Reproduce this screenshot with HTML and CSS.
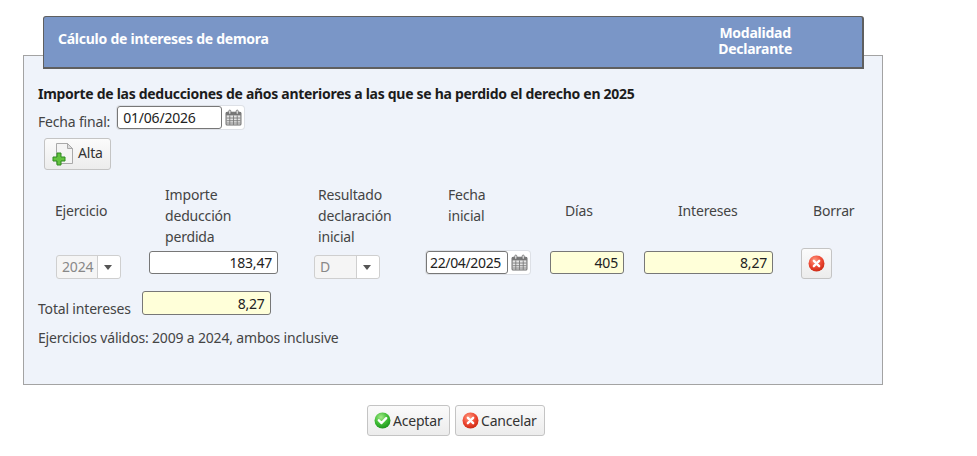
FILE: index.html
```html
<!DOCTYPE html>
<html lang="es">
<head>
    <meta charset="UTF-8">
    <title>Cálculo de intereses de demora</title>
    <link rel="stylesheet" href="styles.css">
</head>
<body>

<svg class="icon-defs" width="0" height="0">
    <defs>
        <radialGradient id="redBall" cx="40%" cy="30%" r="75%">
            <stop offset="0" stop-color="#ff9a80"/>
            <stop offset="0.55" stop-color="#ee4a35"/>
            <stop offset="1" stop-color="#c9260f"/>
        </radialGradient>
        <radialGradient id="greenBall" cx="40%" cy="30%" r="75%">
            <stop offset="0" stop-color="#a5e88a"/>
            <stop offset="0.55" stop-color="#3fbd35"/>
            <stop offset="1" stop-color="#1c8f1c"/>
        </radialGradient>
        <symbol id="calendar" viewBox="0 0 16 16">
            <rect x="1" y="3" width="14" height="12" rx="1" fill="#e4e4e4" stroke="#6d6d6d"/>
            <rect x="1" y="3" width="14" height="3" fill="#777"/>
            <path d="M1.5 8.5h13M1.5 11h13M1.5 13.2h13M4.5 6v9M8 6v9M11.5 6v9" stroke="#777" stroke-width="0.8" fill="none"/>
            <rect x="3.5" y="1" width="2" height="4" rx="1" fill="#e8e8e8" stroke="#666" stroke-width="0.7"/>
            <rect x="10.5" y="1" width="2" height="4" rx="1" fill="#e8e8e8" stroke="#666" stroke-width="0.7"/>
        </symbol>
        <symbol id="cross" viewBox="0 0 16 16">
            <circle cx="8" cy="8" r="7.5" fill="url(#redBall)"/>
            <path d="M5.5 5.5l5 5M10.5 5.500l-5 5" stroke="#fff" stroke-width="2.2" stroke-linecap="round"/>
        </symbol>
        <symbol id="check" viewBox="0 0 16 16">
            <circle cx="8" cy="8" r="7.5" fill="url(#greenBall)"/>
            <path d="M4.5 7.8l2.6 2.6 4.4-4.6" stroke="#fff" stroke-width="2.2" fill="none" stroke-linecap="round" stroke-linejoin="round"/>
        </symbol>
    </defs>
</svg>

<div class="page">
    <div class="title-bar">
        <div class="title-text">Cálculo de intereses de demora</div>
        <div class="title-side">Modalidad<br>Declarante</div>
    </div>

    <div class="panel">
        <h1 class="section-title">Importe de las deducciones de años anteriores a las que se ha perdido el derecho en 2025</h1>

        <div class="final-date">
            <label>Fecha final:</label>
            <div class="date-field">
                <input class="field date-input" type="text" value="01/06/2026">
                <span class="cal-btn"><svg class="cal-icon"><use href="#calendar"/></svg></span>
            </div>
        </div>

        <button class="btn btn-alta" type="button">
            <svg class="doc-icon" viewBox="0 0 24 24">
                <path d="M5.5 1.5h11l5 5v15h-16z" fill="#f4f4f4" stroke="#a9a9a9"/>
                <path d="M16.5 1.5v5h5z" fill="#dcdcdc" stroke="#a9a9a9"/>
                <path d="M6 11h4v4h4v4h-4v4H6v-4H2v-4h4z" fill="#63c23f" stroke="#2e8a1e"/>
            </svg>
            <span class="alta-text">Alta</span>
        </button>

        <div class="deductions">
            <div class="col-label col-single label-year">Ejercicio</div>
            <div class="col-label label-amount">Importe<br>deducción<br>perdida</div>
            <div class="col-label label-result">Resultado<br>declaración<br>inicial</div>
            <div class="col-label label-start">Fecha<br>inicial</div>
            <div class="col-label col-single label-days">Días</div>
            <div class="col-label col-single label-interest">Intereses</div>
            <div class="col-label col-single label-delete">Borrar</div>

            <div class="select-box select-year"><span class="select-value">2024</span><span class="select-arrow"></span></div>
            <input class="field money" type="text" value="183,47">
            <div class="select-box select-result"><span class="select-value">D</span><span class="select-arrow"></span></div>
            <div class="date-field date-start">
                <input class="field date-input" type="text" value="22/04/2025">
                <span class="cal-btn"><svg class="cal-icon"><use href="#calendar"/></svg></span>
            </div>
            <input class="field calc days" type="text" value="405">
            <input class="field calc money" type="text" value="8,27">
            <button class="btn btn-delete" type="button"><svg class="ball"><use href="#cross"/></svg></button>
        </div>

        <div class="total">
            <label>Total intereses</label>
            <input class="field calc money" type="text" value="8,27">
        </div>

        <p class="note">Ejercicios válidos: 2009 a 2024, ambos inclusive</p>
    </div>

    <div class="actions">
        <button class="btn btn-action btn-accept" type="button"><svg class="ball"><use href="#check"/></svg><span>Aceptar</span></button>
        <button class="btn btn-action btn-cancel" type="button"><svg class="ball"><use href="#cross"/></svg><span>Cancelar</span></button>
    </div>
</div>

</body>
</html>
```

FILE: styles.css
```css
html,
body {
    margin: 0;
    background-color: #fff;
    font-family: "Noto Sans", Arial, sans-serif;
    font-size: 14px;
    letter-spacing: -0.18px;
    color: #444;
}
.icon-defs {
    display: block;
}
.page {
    width: 860px;
    margin-left: 23px;
    padding-top: 16px;
}
.title-bar {
    position: relative;
    z-index: 1;
    display: flex;
    justify-content: space-between;
    box-sizing: border-box;
    height: 53px;
    margin: 0 19px 0 20px;
    padding: 8px 70px 0 14px;
    background-color: #7a96c7;
    border: 1px solid #5f5f5f;
    border-width: 1px 2px 2px 1px;
    border-radius: 3px 3px 0 0;
    color: #fff;
    font-weight: bold;
    letter-spacing: -0.25px;
}
.title-text {
    padding-top: 5px;
    line-height: 18px;
}
.title-side {
    line-height: 16px;
    text-align: center;
}
.panel {
    box-sizing: border-box;
    height: 330px;
    margin-top: -14px;
    padding: 28px 15px 0 14px;
    background-color: #eff3fa;
    border: 1px solid #a3a3a3;
}
.section-title {
    margin: 0;
    font-size: 14px;
    line-height: 20px;
    font-weight: bold;
    letter-spacing: -0.29px;
    color: #1c1c1c;
}
.final-date {
    display: flex;
    align-items: flex-end;
    gap: 7px;
    margin-top: 2px;
}
.final-date label {
    margin-bottom: -2px;
}
.date-field {
    display: inline-flex;
    background-color: #fff;
    border-radius: 3px;
    box-shadow: 0 0 0 1px #dde0e6;
}
.field {
    box-sizing: border-box;
    height: 23px;
    padding: 0 5px;
    border: 1px solid #777;
    border-radius: 3px;
    background-color: #fff;
    font-family: inherit;
    font-size: 14px;
    letter-spacing: -0.2px;
    color: #222;
}
.date-input {
    width: 105px;
}
.cal-btn {
    display: flex;
    align-items: center;
    justify-content: center;
    width: 22px;
}
.cal-icon {
    width: 17px;
    height: 17px;
}
.btn {
    display: inline-flex;
    align-items: center;
    box-sizing: border-box;
    padding: 0;
    border: 1px solid #c4c4c4;
    border-radius: 3px;
    background: linear-gradient(#fbfbfb, #ececec);
    font-family: inherit;
    font-size: 14px;
    letter-spacing: -0.2px;
    color: #333;
}
.btn-alta {
    width: 67px;
    height: 32px;
    margin: 9px 0 0 6px;
    padding-left: 6px;
    gap: 3px;
}
.alta-text {
    margin-bottom: 3px;
}
.doc-icon {
    width: 24px;
    height: 24px;
}
.deductions {
    display: grid;
    grid-template-columns: 94px 165px 112px 124px 94px 157px 60px;
    grid-template-rows: 65px 33px;
    margin: 13px 0 0 17px;
}
.col-label {
    align-self: center;
    line-height: 21px;
}
.col-single { margin-top: -10px; }
.label-amount { padding-left: 16px; }
.label-result { padding-left: 4px; }
.label-start { padding-left: 22px; margin-top: -21px; }
.label-days { padding-left: 15px; }
.label-interest { padding-left: 34px; }
.label-delete { padding-left: 12px; }
.select-box {
    display: flex;
    align-self: end;
    box-sizing: border-box;
    height: 24px;
    margin-bottom: 2px;
    background-color: #f5f5f5;
    border: 1px solid #cfcfcf;
    border-radius: 3px;
    color: #888;
    line-height: 22px;
}
.select-year {
    width: 65px;
    margin-left: 1px;
}
.select-result {
    width: 66px;
}
.select-value {
    flex: 1;
    padding-left: 5px;
}
.select-arrow {
    position: relative;
    width: 22px;
    background-color: #fff;
    border-left: 1px solid #cfcfcf;
    border-radius: 0 3px 3px 0;
}
.select-arrow::after {
    content: "";
    position: absolute;
    top: 9px;
    left: 6px;
    border: 4px solid transparent;
    border-top: 5px solid #555;
    border-bottom: 0;
}
.deductions .field {
    margin-top: 3px;
}
.money {
    width: 129px;
    text-align: right;
}
.calc {
    background-color: #ffffd9;
}
.days {
    width: 74px;
    text-align: right;
}
.date-start {
    align-self: start;
    width: 104px;
    margin-top: 3px;
}
.deductions .date-start .date-input {
    width: 82px;
    margin-top: 0;
    padding: 0 3px;
    letter-spacing: -0.35px;
}
.btn-delete {
    justify-content: center;
    width: 31px;
    height: 31px;
}
.ball {
    width: 17px;
    height: 17px;
}
.total {
    display: flex;
    align-items: flex-end;
    gap: 11px;
    margin-top: 10px;
}
.total label {
    margin-bottom: -3px;
}
.total .field {
    height: 24px;
}
.note {
    margin: 13px 0 0;
    line-height: 20px;
}
.actions {
    display: flex;
    justify-content: center;
    gap: 5px;
    width: 912px;
    margin: 20px 0 0 -23px;
}
.btn-action {
    height: 31px;
    padding: 0 0 0 6px;
    gap: 2px;
}
.btn-accept { width: 83px; }
.btn-cancel { width: 90px; }
```
